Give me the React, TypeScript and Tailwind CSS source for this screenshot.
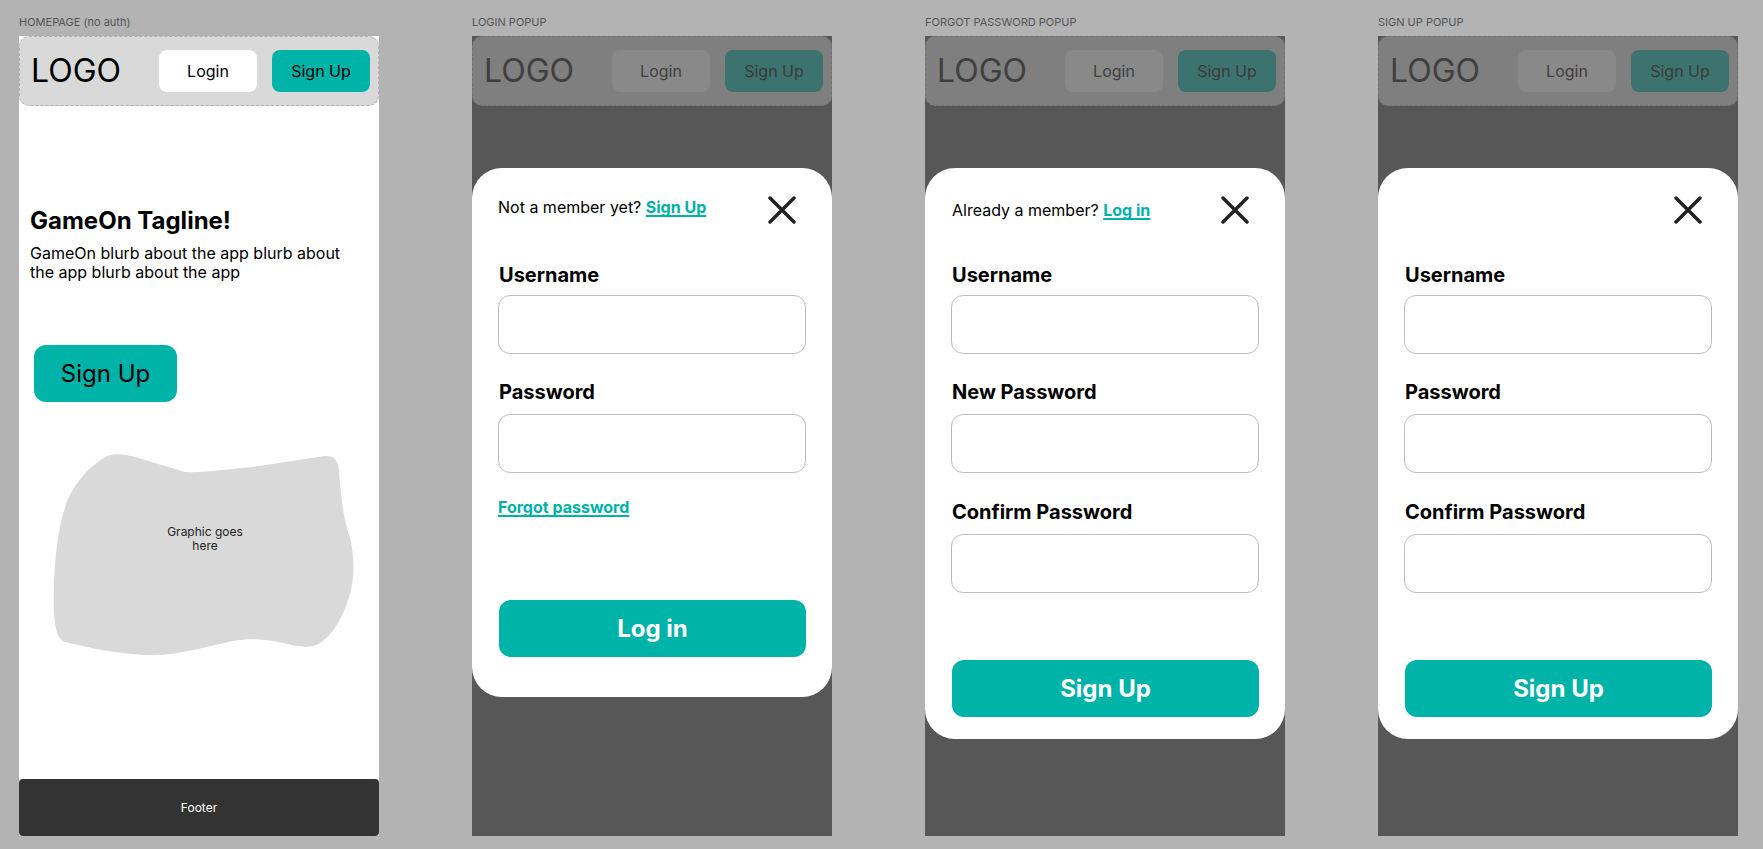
import React from "react";

const TEAL = "bg-[#00b3a8]";
const LINK = "font-bold text-[#00b3a8] underline underline-offset-2 decoration-[1.5px] [text-decoration-skip-ink:none]";

function CloseIcon() {
  return (
    <svg width="28" height="28" viewBox="0 0 28 28" fill="none">
      <path d="M2 2 L26 26 M26 2 L2 26" stroke="#222222" strokeWidth="3.5" strokeLinecap="round" />
    </svg>
  );
}

function Header({ dim }: { dim?: boolean }) {
  if (!dim) {
    return (
      <div className="h-[70px] shrink-0 bg-[#d9d9d9] rounded-[10px] border border-dashed border-[#b0b0b0] flex items-center pl-[11px] pr-[8px]">
        <div className="text-[32px] leading-[36px] text-black">LOGO</div>
        <div className="ml-auto flex gap-[15px]">
          <div className="w-[98px] h-[42px] rounded-[8px] bg-white flex items-center justify-center text-[16px] text-black">Login</div>
          <div className={`w-[98px] h-[42px] rounded-[8px] ${TEAL} flex items-center justify-center text-[16px] text-black`}>Sign Up</div>
        </div>
      </div>
    );
  }
  return (
    <div className="h-[70px] shrink-0 bg-[#7f7f7f] rounded-[10px] border border-dashed border-[#717171] flex items-center pl-[11px] pr-[8px]">
      <div className="text-[32px] leading-[36px] text-[#3f3f3f]">LOGO</div>
      <div className="ml-auto flex gap-[15px]">
        <div className="w-[98px] h-[42px] rounded-[8px] bg-[#898989] flex items-center justify-center text-[16px] text-[#3f3f3f]">Login</div>
        <div className="w-[98px] h-[42px] rounded-[8px] bg-[#3d736f] flex items-center justify-center text-[16px] text-[#3a3a3a]">Sign Up</div>
      </div>
    </div>
  );
}

function Blob() {
  return (
    <div className="relative w-[302px] h-[204px] ml-[34px] mt-[51px]">
      <svg className="absolute inset-0" width="302" height="204" viewBox="0 0 302 204">
        <path
          d="M 54 3 C 62 0, 72 1, 82 4 L 132 19 C 150 20, 175 16, 200 14 L 272 3 C 281 2, 285 8, 286 18 C 288 40, 289 60, 296 82 C 302 100, 302 130, 295 147 C 290 165, 275 190, 260 193 C 250 195, 240 192, 225 189 C 210 186, 195 185, 180 188 C 155 193, 125 203, 95 202 C 60 201, 30 193, 12 189 C 4 186, 2 175, 1 160 C 0 120, 3 80, 14 48 C 24 26, 38 12, 54 3 Z"
          fill="#d9d9d9"
        />
      </svg>
      <div className="absolute left-0 right-0 top-[72px] text-center text-[12px] leading-[14px] text-[#222] pl-[2px]">
        Graphic goes
        <br />
        here
      </div>
    </div>
  );
}

function Homepage() {
  return (
    <div className="w-[360px] h-[800px] bg-white flex flex-col">
      <Header />
      <div className="mt-[100px] px-[11px]">
        <div className="text-[24px] leading-[29px] font-bold text-black">GameOn Tagline!</div>
        <div className="mt-[9px] text-[16px] leading-[19px] text-black">
          GameOn blurb about the app blurb about
          <br />
          the app blurb about the app
        </div>
      </div>
      <div className={`mt-[63px] ml-[15px] w-[143px] h-[57px] rounded-[12px] ${TEAL} flex items-center justify-center text-[24px] text-black`}>
        Sign Up
      </div>
      <Blob />
      <div className="mt-auto h-[57px] bg-[#333333] rounded-[4px] flex items-center justify-center text-[12px] text-white">
        Footer
      </div>
    </div>
  );
}

function Input({ mt }: { mt: string }) {
  return <div className={`${mt} h-[59px] rounded-[12px] border border-[#bdbdbd] bg-white`} />;
}

function Label({ text, mt }: { text: string; mt: string }) {
  return <div className={`${mt} pl-[1px] text-[20px] leading-[24px] font-bold text-black`}>{text}</div>;
}

function LoginPopup() {
  return (
    <div className="w-[360px] h-[800px] bg-[#575757] flex flex-col">
      <Header dim />
      <div className="mt-[62px] bg-white rounded-[30px] px-[26px] pb-[40px] flex flex-col">
        <div className="mt-[28px] h-[28px] flex items-center justify-between pr-[10px]">
          <div className="text-[16px] leading-[20px] text-black -mt-[6px]">
            Not a member yet? <span className={LINK}>Sign Up</span>
          </div>
          <CloseIcon />
        </div>
        <Label text="Username" mt="mt-[39px]" />
        <Input mt="mt-[8px]" />
        <Label text="Password" mt="mt-[26px]" />
        <Input mt="mt-[10px]" />
        <div className={`mt-[24px] text-[16px] leading-[20px] ${LINK}`}>Forgot password</div>
        <div className={`mt-[83px] ml-[1px] h-[57px] rounded-[12px] ${TEAL} flex items-center justify-center text-[24px] font-bold text-white`}>
          Log in
        </div>
      </div>
    </div>
  );
}

function ThreeFieldPopup({ top, second }: { top: React.ReactNode; second: string }) {
  return (
    <div className="w-[360px] h-[800px] bg-[#575757] flex flex-col">
      <Header dim />
      <div className="mt-[62px] bg-white rounded-[30px] px-[26px] pb-[22px] flex flex-col">
        <div className="mt-[28px] h-[28px] flex items-center justify-between pr-[10px]">
          <div className="text-[16px] leading-[20px] text-black -mt-[1px] pl-[1px]">{top}</div>
          <CloseIcon />
        </div>
        <Label text="Username" mt="mt-[39px]" />
        <Input mt="mt-[8px]" />
        <Label text={second} mt="mt-[26px]" />
        <Input mt="mt-[10px]" />
        <Label text="Confirm Password" mt="mt-[27px]" />
        <Input mt="mt-[10px]" />
        <div className={`mt-[67px] ml-[1px] h-[57px] rounded-[12px] ${TEAL} flex items-center justify-center text-[24px] font-bold text-white`}>
          Sign Up
        </div>
      </div>
    </div>
  );
}

function Column({ label, children }: { label: string; children: React.ReactNode }) {
  return (
    <div className="flex flex-col w-[360px] shrink-0">
      <div className="h-[36px] pt-[16px] text-[11px] leading-[13px] text-[#555555]">{label}</div>
      {children}
    </div>
  );
}

export default function App() {
  return (
    <div className="w-[1763px] h-[849px] overflow-hidden bg-[#b3b3b3] flex gap-[93px] pl-[19px] font-['Inter','Noto_Sans',sans-serif]">
      <Column label="HOMEPAGE (no auth)">
        <Homepage />
      </Column>
      <Column label="LOGIN POPUP">
        <LoginPopup />
      </Column>
      <Column label="FORGOT PASSWORD POPUP">
        <ThreeFieldPopup
          second="New Password"
          top={
            <>
              Already a member? <span className={LINK}>Log in</span>
            </>
          }
        />
      </Column>
      <Column label="SIGN UP POPUP">
        <ThreeFieldPopup second="Password" top={null} />
      </Column>
    </div>
  );
}
